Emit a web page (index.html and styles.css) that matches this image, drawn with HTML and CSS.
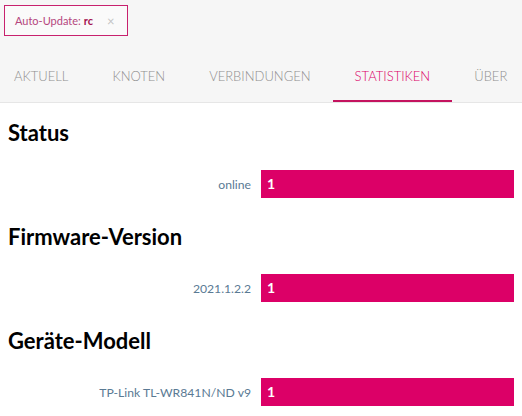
FILE: index.html
```html
<!DOCTYPE html>
<html lang="de">
<head>
  <meta charset="UTF-8">
  <title>Statistiken</title>
  <link rel="stylesheet" href="styles.css">
</head>
<body>
  <div class="header">
    <div class="update-bar">
      <span class="update-tag">Auto-Update: <b>rc</b> <span class="close">×</span></span>
    </div>
    <div class="tabs">
      <div class="tab">Aktuell</div>
      <div class="tab">Knoten</div>
      <div class="tab">Verbindungen</div>
      <div class="tab active">Statistiken</div>
      <div class="tab">Über</div>
    </div>
  </div>

  <div class="content">
    <h2>Status</h2>
    <table class="stats">
      <tr>
        <th>online</th>
        <td><span class="bar" style="width: 100%;">1</span></td>
      </tr>
    </table>

    <h2>Firmware-Version</h2>
    <table class="stats">
      <tr>
        <th>2021.1.2.2</th>
        <td><span class="bar" style="width: 100%;">1</span></td>
      </tr>
    </table>

    <h2>Geräte-Modell</h2>
    <table class="stats">
      <tr>
        <th>TP-Link TL-WR841N/ND v9</th>
        <td><span class="bar" style="width: 100%;">1</span></td>
      </tr>
    </table>
  </div>
</body>
</html>
```

FILE: styles.css
```css
body, html {
  margin: 0;
  font-family: Lato, "Open Sans", sans-serif;
  background-color: #fff;
}

.header {
  background-color: #f6f6f6;
  border-bottom: 1px solid #e6e6e6;
}

.update-bar {
  padding: 5px 0 0 4px;
}

.update-tag {
  display: inline-flex;
  align-items: center;
  height: 29px;
  padding: 0 12px 0 10px;
  border: 1px solid #c8216e;
  font-size: 11px;
  color: #b5467d;
  background-color: #fafafa;
}

.update-tag b {
  color: #a4124f;
  margin-left: 3px;
}

.close {
  color: #c4c4c4;
  font-size: 13px;
  margin-left: 14px;
}

.tabs {
  display: flex;
  margin-top: 16px;
  overflow: hidden;
}

.tab {
  padding: 0 22px;
  height: 48px;
  line-height: 48px;
  border-bottom: 2px solid transparent;
  font-size: 13px;
  font-weight: 300;
  text-transform: uppercase;
  color: #8f8f8f;
  white-space: nowrap;
}

.tab:first-child {
  padding-left: 14px;
}

.tab.active {
  color: #dc0067;
  border-bottom-color: #c4135f;
}

.content {
  padding: 0 8px;
}

h2 {
  font-size: 22px;
  line-height: 28px;
  font-weight: bold;
  margin: 25px 0 23px;
  color: #000;
}

h2:first-child {
  margin-top: 16px;
}

.stats {
  width: 100%;
  border-collapse: collapse;
  table-layout: fixed;
}

.stats th {
  width: 50%;
  box-sizing: border-box;
  text-align: right;
  font-weight: normal;
  font-size: 12.2px;
  color: #5a7a94;
  padding: 0 10px 0 0;
}

.stats td {
  padding: 0;
}

.bar {
  display: block;
  height: 28px;
  line-height: 28px;
  padding-left: 6px;
  box-sizing: border-box;
  background-color: #dc0067;
  color: #fff;
  font-weight: bold;
  font-size: 14px;
}
```
